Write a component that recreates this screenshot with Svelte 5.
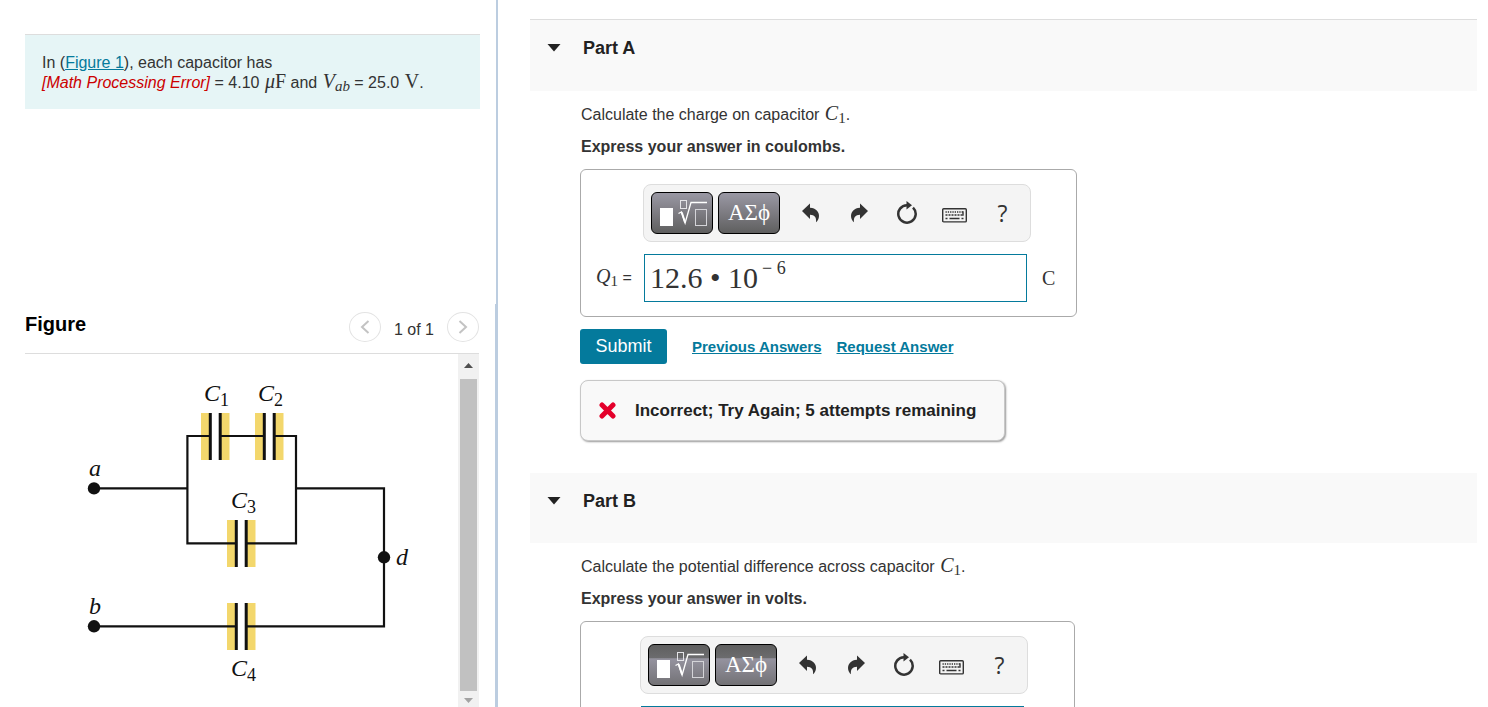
<script>
  /**
   * Homework item view: problem statement and figure on the left,
   * answerable parts on the right.
   */

  const capacitors = [
    { n: 1, x: 176, y: 59, labelX: 179, labelY: 47 },
    { n: 2, x: 230, y: 59, labelX: 233, labelY: 47 },
    { n: 3, x: 202, y: 166, labelX: 206, labelY: 154 },
    { n: 4, x: 202, y: 249, labelX: 206, labelY: 322 },
  ];

  const parts = [
    {
      id: "a",
      title: "Part A",
      prompt: "Calculate the charge on capacitor",
      instruction: "Express your answer in coulombs.",
      symbol: "Q",
      labelWidth: 49,
      unit: "C",
      value: { base: "12.6 • 10", exp: "− 6" },
      feedback: "Incorrect; Try Again; 5 attempts remaining",
    },
    {
      id: "b",
      title: "Part B",
      prompt: "Calculate the potential difference across capacitor",
      instruction: "Express your answer in volts.",
      symbol: "V",
      labelWidth: 46,
      unit: "V",
    },
  ];

  let collapsed = $state({ a: false, b: false });

  const toggle = (id) => {
    collapsed[id] = !collapsed[id];
  };
</script>

{#snippet toolbar(id)}
  <div class="toolbar" role="toolbar" aria-label="Math tools">
    <button class="tool tool--dark tool--{id}" aria-label="Templates">
      <svg width="60" height="40" viewBox="1 1 60 40" fill="none" stroke="#fff">
        <rect x="9" y="16" width="13" height="18" fill="#fff" stroke="none" />
        <rect x="29.5" y="8.5" width="6" height="8" stroke="#e4e4e8" />
        <path d="M27.5 21.5l3-1.5 3.6 11L40 10.5h16" stroke-width="1.3" />
        <path d="M30.8 20.5l3.3 10" stroke-width="2" />
        <rect x="44.5" y="17.5" width="11" height="16" stroke="#d4d4d8" />
      </svg>
    </button>
    <button class="tool tool--dark tool--greek tool--{id}" aria-label="Symbols">ΑΣϕ</button>
    <button class="tool tool--plain" aria-label="Undo">
      <svg width="18" height="20" viewBox="0 0 18 20">
        <path d="M0 8L8 .5v4.2c6 .4 9 4 9 8.3c0 3-1.5 5.2-3 6.2c.6-4.7-1.300-7.2-6-7.4V16z" />
      </svg>
    </button>
    <button class="tool tool--plain" aria-label="Redo">
      <svg width="18" height="20" viewBox="0 0 18 20">
        <path d="M18 8L10 .5v4.2C4 5.1 1 8.7 1 13c0 3 1.5 5.2 3 6.2c-.6-4.7 1.3-7.2 6-7.4V16z" />
      </svg>
    </button>
    <button class="tool tool--plain" aria-label="Reset">
      <svg width="20" height="24" viewBox="0 0 20 24">
        <path d="M16 6.6A8.7 8.7 0 1 1 10 4.2" fill="none" stroke="#333" stroke-width="2.5" />
        <path d="M9.5 0l5.5 4.3-5.5 4.2z" />
      </svg>
    </button>
    <button class="tool tool--plain" aria-label="Keyboard shortcuts">
      <svg class="keyboard" width="25" height="15" viewBox="0 0 25 15" fill="none" stroke="#333">
        <rect x=".7" y=".7" width="23.6" height="13.2" rx="1" stroke-width="1.4" />
        <path d="M3.5 4h18" stroke-width="1.3" stroke-dasharray="1.3 1" />
        <path d="M3.5 7h18" stroke-width="1.6" stroke-dasharray="2 1" />
        <path d="M21 3.3v4.4" stroke-width="1.4" />
        <path d="M3.5 10.5h2M7.5 10.5h10M19.5 10.5h2" stroke-width="1.4" />
      </svg>
    </button>
    <button class="tool tool--plain tool--help" aria-label="Help">?</button>
  </div>
{/snippet}

<div class="page">
  <aside class="side">
    <section class="problem">
      <p class="statement">
        In (<a href="#figure">Figure 1</a>), each capacitor has<br />
        <span class="math-error">[Math Processing Error]</span> = 4.10
        <span class="math"><i>μ</i>F</span> and
        <span class="math"><i>V</i><sub><i>ab</i></sub></span> = 25.0
        <span class="math">V</span>.
      </p>
    </section>

    <section class="figure" id="figure">
      <header class="figure__head">
        <h2>Figure</h2>
        <nav class="pager" aria-label="Figures">
          <button aria-label="Previous figure">
            <svg width="10" height="14" viewBox="0 0 10 14"><path d="M8.5 1L2 7l6.5 6" /></svg>
          </button>
          <span>1 of 1</span>
          <button aria-label="Next figure">
            <svg width="10" height="14" viewBox="0 0 10 14"><path d="M1.5 1L8 7l-6.5 6" /></svg>
          </button>
        </nav>
      </header>

      <div class="figure__body">
        <div class="figure__view">
          <svg class="circuit" width="433" height="353" viewBox="0 0 433 353" role="img" aria-label="Capacitor network">
            {#each capacitors as c}
              <rect x={c.x} y={c.y} width="9" height="47" fill="#f3d76c" />
              <rect x={c.x + 19} y={c.y} width="9.5" height="47" fill="#f3d76c" />
              <path class="plate" d="M{c.x + 9.3} {c.y}v47M{c.x + 19.2} {c.y}v47" />
              <text x={c.labelX} y={c.labelY}><tspan class="it">C</tspan><tspan class="sub" dy="5">{c.n}</tspan></text>
            {/each}
            <g class="wire">
              <path d="M69 134.4H162.4" />
              <path d="M185 82H162.4V189.4H211" />
              <path d="M195 82h44M249 82H271V189.4H221" />
              <path d="M271 134.4H359V272.3H221" />
              <path d="M69 272.3H211" />
            </g>
            <circle cx="69" cy="134.4" r="6.2" />
            <circle cx="69" cy="272.3" r="6.2" />
            <circle cx="359" cy="203.3" r="6.2" />
            <text class="it" x="64" y="122">a</text>
            <text class="it" x="64" y="260">b</text>
            <text class="it" x="371" y="211">d</text>
          </svg>
        </div>
        <div class="scrollbar" aria-hidden="true">
          <svg width="21" height="25" viewBox="0 0 21 25"><path d="M6 14l4.500-5 4.500 5z" fill="#505050" /></svg>
          <div class="scrollbar__thumb"></div>
          <svg width="21" height="16" viewBox="0 0 21 16"><path d="M6 7h9l-4.500 5z" fill="#a3a3a3" /></svg>
        </div>
      </div>
    </section>
  </aside>

  <main class="parts">
    {#each parts as part (part.id)}
      <section class="part">
        <header class="part__head">
          <button class="part__toggle" aria-expanded={!collapsed[part.id]} onclick={() => toggle(part.id)}>
            <svg width="14" height="8" viewBox="0 0 14 8"><path d="M.5 0h13L7 7.500z" fill="#222" /></svg>
            {part.title}
          </button>
        </header>

        {#if !collapsed[part.id]}
          <div class="part__body">
            <p>{part.prompt} <span class="math"><i>C</i><sub>1</sub></span>.</p>
            <p class="instruction">{part.instruction}</p>

            <div class="answer">
              <div class="answer__tools" style="padding-left:{part.labelWidth - 1}px">
                {@render toolbar(part.id)}
              </div>
              <div class="answer__row">
                <label for="answer-{part.id}" style="width:{part.labelWidth}px">
                  <span class="math"><i>{part.symbol}</i><sub>1</sub></span> =
                </label>
                <div class="field">
                  <input id="answer-{part.id}" type="text" autocomplete="off" />
                  {#if part.value}
                    <span class="field__math">{part.value.base}<sup>{part.value.exp}</sup></span>
                  {/if}
                </div>
                <span class="unit">{part.unit}</span>
              </div>
            </div>

            <div class="actions">
              <button class="submit">Submit</button>
              <a href="#previous">Previous Answers</a>
              <a href="#request">Request Answer</a>
            </div>

            {#if part.feedback}
              <div class="feedback" role="status">
                <svg width="17" height="17" viewBox="0 0 17 17">
                  <path d="M3 3l11 11M14 3L3 14" stroke="#e4002b" stroke-width="5" stroke-linecap="round" />
                </svg>
                {part.feedback}
              </div>
            {/if}
          </div>
        {/if}
      </section>
    {/each}
  </main>
</div>

<style>
  :global(body) {
    background: #fff;
    color: #333;
    font-family: "Liberation Sans", Arial, sans-serif;
    font-size: 16px;
    line-height: 20px;
  }

  .page,
  .page * {
    box-sizing: border-box;
  }
  .page {
    display: grid;
    grid-template-columns: 498px minmax(0, 1fr);
    height: 100vh;
    overflow: hidden;
  }
  p,
  h2 {
    margin: 0;
  }
  button {
    padding: 0;
    font-family: inherit;
    cursor: pointer;
  }
  a {
    color: #047a9c;
  }

  .math {
    margin-left: 1px;
    font-family: "Liberation Serif", "Times New Roman", serif;
    font-size: 20px;
    line-height: 0;
  }
  .math sub {
    font-size: 15px;
    line-height: 0;
    vertical-align: -3px;
  }

  /* left column */
  .side {
    display: flex;
    flex-direction: column;
    min-height: 0;
  }
  .problem {
    flex: 0 0 304px;
    padding: 34px 16px 0 25px;
    border-right: 2px solid #bccde0;
  }
  .statement {
    padding: 18px 16px 16px 17px;
    background: #e6f5f6;
    border-top: 1px solid #ddd;
  }
  .math-error {
    color: #c00;
    font-style: italic;
  }

  .figure {
    flex: 1;
    display: flex;
    flex-direction: column;
    min-height: 0;
    padding: 0 16px 0 25px;
    border-right: 3px solid #bccde0;
  }
  .figure__head {
    display: flex;
    justify-content: space-between;
    height: 50px;
    padding-top: 8px;
    border-bottom: 1px solid #ddd;
  }
  .figure__head h2 {
    padding-top: 2px;
    color: #000;
    font-size: 20px;
  }
  .pager {
    display: flex;
    gap: 13px;
  }
  .pager span {
    padding-top: 8px;
  }
  .pager button {
    display: grid;
    place-items: center;
    width: 32px;
    height: 30px;
    background: #fff;
    border: 1px solid #e3e3e3;
    border-radius: 50%;
  }
  .pager path {
    fill: none;
    stroke: #c3c3c3;
    stroke-width: 2;
  }
  .figure__body {
    flex: 1;
    display: flex;
    min-height: 0;
  }
  .figure__view {
    flex: 1;
    min-width: 0;
    overflow: hidden;
  }
  .circuit {
    display: block;
    fill: #111;
    font-family: "Liberation Serif", "Times New Roman", serif;
    font-size: 24px;
  }
  .it {
    font-style: italic;
  }
  .sub {
    font-size: 18px;
  }
  .plate {
    stroke: #111;
    stroke-width: 3;
  }
  .wire {
    fill: none;
    stroke: #111;
    stroke-width: 2.2;
  }
  .scrollbar {
    display: flex;
    flex-direction: column;
    flex: 0 0 21px;
    background: #f1f1f1;
  }
  .scrollbar__thumb {
    flex: 1;
    margin: 0 2px;
    background: #c1c1c1;
  }

  /* right column */
  .parts {
    min-width: 0;
    padding: 19px 11px 0 32px;
    overflow: hidden;
  }
  .part__head {
    height: 70px;
    padding: 18px 22px 0 17px;
    background: #f9f9f9;
  }
  .part:first-child .part__head {
    height: 72px;
    border-top: 1px solid #ddd;
  }
  .part__toggle {
    display: flex;
    align-items: center;
    gap: 22px;
    background: none;
    border: 0;
    color: #222;
    font-size: 18px;
    font-weight: bold;
    line-height: 20px;
  }
  .part__body {
    padding: 14px 0 32px 50px;
  }
  .part__body p {
    padding-left: 1px;
  }
  .instruction {
    margin-top: 12px;
    font-weight: bold;
  }

  .answer {
    width: fit-content;
    margin-top: 12px;
    padding: 14px;
    border: 1px solid #aaa;
    border-radius: 6px;
  }
  .toolbar {
    display: flex;
    gap: 5px;
    width: 388px;
    height: 58px;
    padding: 7px;
    background: #f4f4f4;
    border: 1px solid #ddd;
    border-radius: 8px;
  }
  .tool {
    display: grid;
    flex: none;
    place-items: center;
    height: 42px;
  }
  .tool--dark {
    width: 62px;
    border: 1px solid #000;
    border-radius: 6px;
    color: #fff;
  }
  .tool--a {
    background: linear-gradient(#9a98a4, #5f5f5f);
  }
  .tool--b {
    background: linear-gradient(#5f5f5f, #6c6c6e 33%, #95939f 34%, #737276);
  }
  .tool--greek {
    margin-right: 4px;
    font-family: "Liberation Serif", "Times New Roman", serif;
    font-size: 23px;
  }
  .tool--plain {
    width: 43px;
    background: none;
    border: 0;
    fill: #333;
  }
  .keyboard {
    margin-top: 5px;
  }
  .tool--help {
    color: #333;
    font-family: "Open Sans", sans-serif;
    font-size: 23px;
  }

  .answer__row {
    display: flex;
    align-items: center;
    margin-top: 12px;
  }
  .field {
    position: relative;
    width: 383px;
    height: 48px;
  }
  .field input {
    width: 100%;
    height: 100%;
    padding: 0 6px;
    border: 1px solid #047a9c;
    border-radius: 0;
    font-size: 20px;
  }
  /* typeset value sits over the text box that takes the keystrokes */
  .field__math {
    position: absolute;
    top: 0;
    left: 6px;
    font-family: "Liberation Serif", "Times New Roman", serif;
    font-size: 30px;
    line-height: 48px;
    pointer-events: none;
  }
  .field__math sup {
    margin-left: 4px;
    font-size: 18px;
    line-height: 0;
    vertical-align: 14px;
  }
  .unit {
    padding: 0 7px 0 15px;
    font-family: "Liberation Serif", "Times New Roman", serif;
    font-size: 20px;
  }

  .actions {
    display: flex;
    align-items: center;
    gap: 15px;
    margin-top: 12px;
    font-size: 15px;
    font-weight: bold;
  }
  .submit {
    width: 87px;
    height: 35px;
    margin-right: 10px;
    background: #047a9c;
    border: 0;
    border-radius: 3px;
    color: #fff;
    font-size: 18px;
  }
  .feedback {
    display: flex;
    align-items: center;
    gap: 19px;
    width: fit-content;
    min-width: 425px;
    height: 61px;
    margin-top: 16px;
    padding: 0 17px 0 18px;
    background: #f9f9f9;
    border: 1px solid #c8c8c8;
    border-radius: 8px;
    box-shadow: 1px 1px 2px #999;
    color: #222;
    font-size: 17px;
    font-weight: bold;
  }
</style>
